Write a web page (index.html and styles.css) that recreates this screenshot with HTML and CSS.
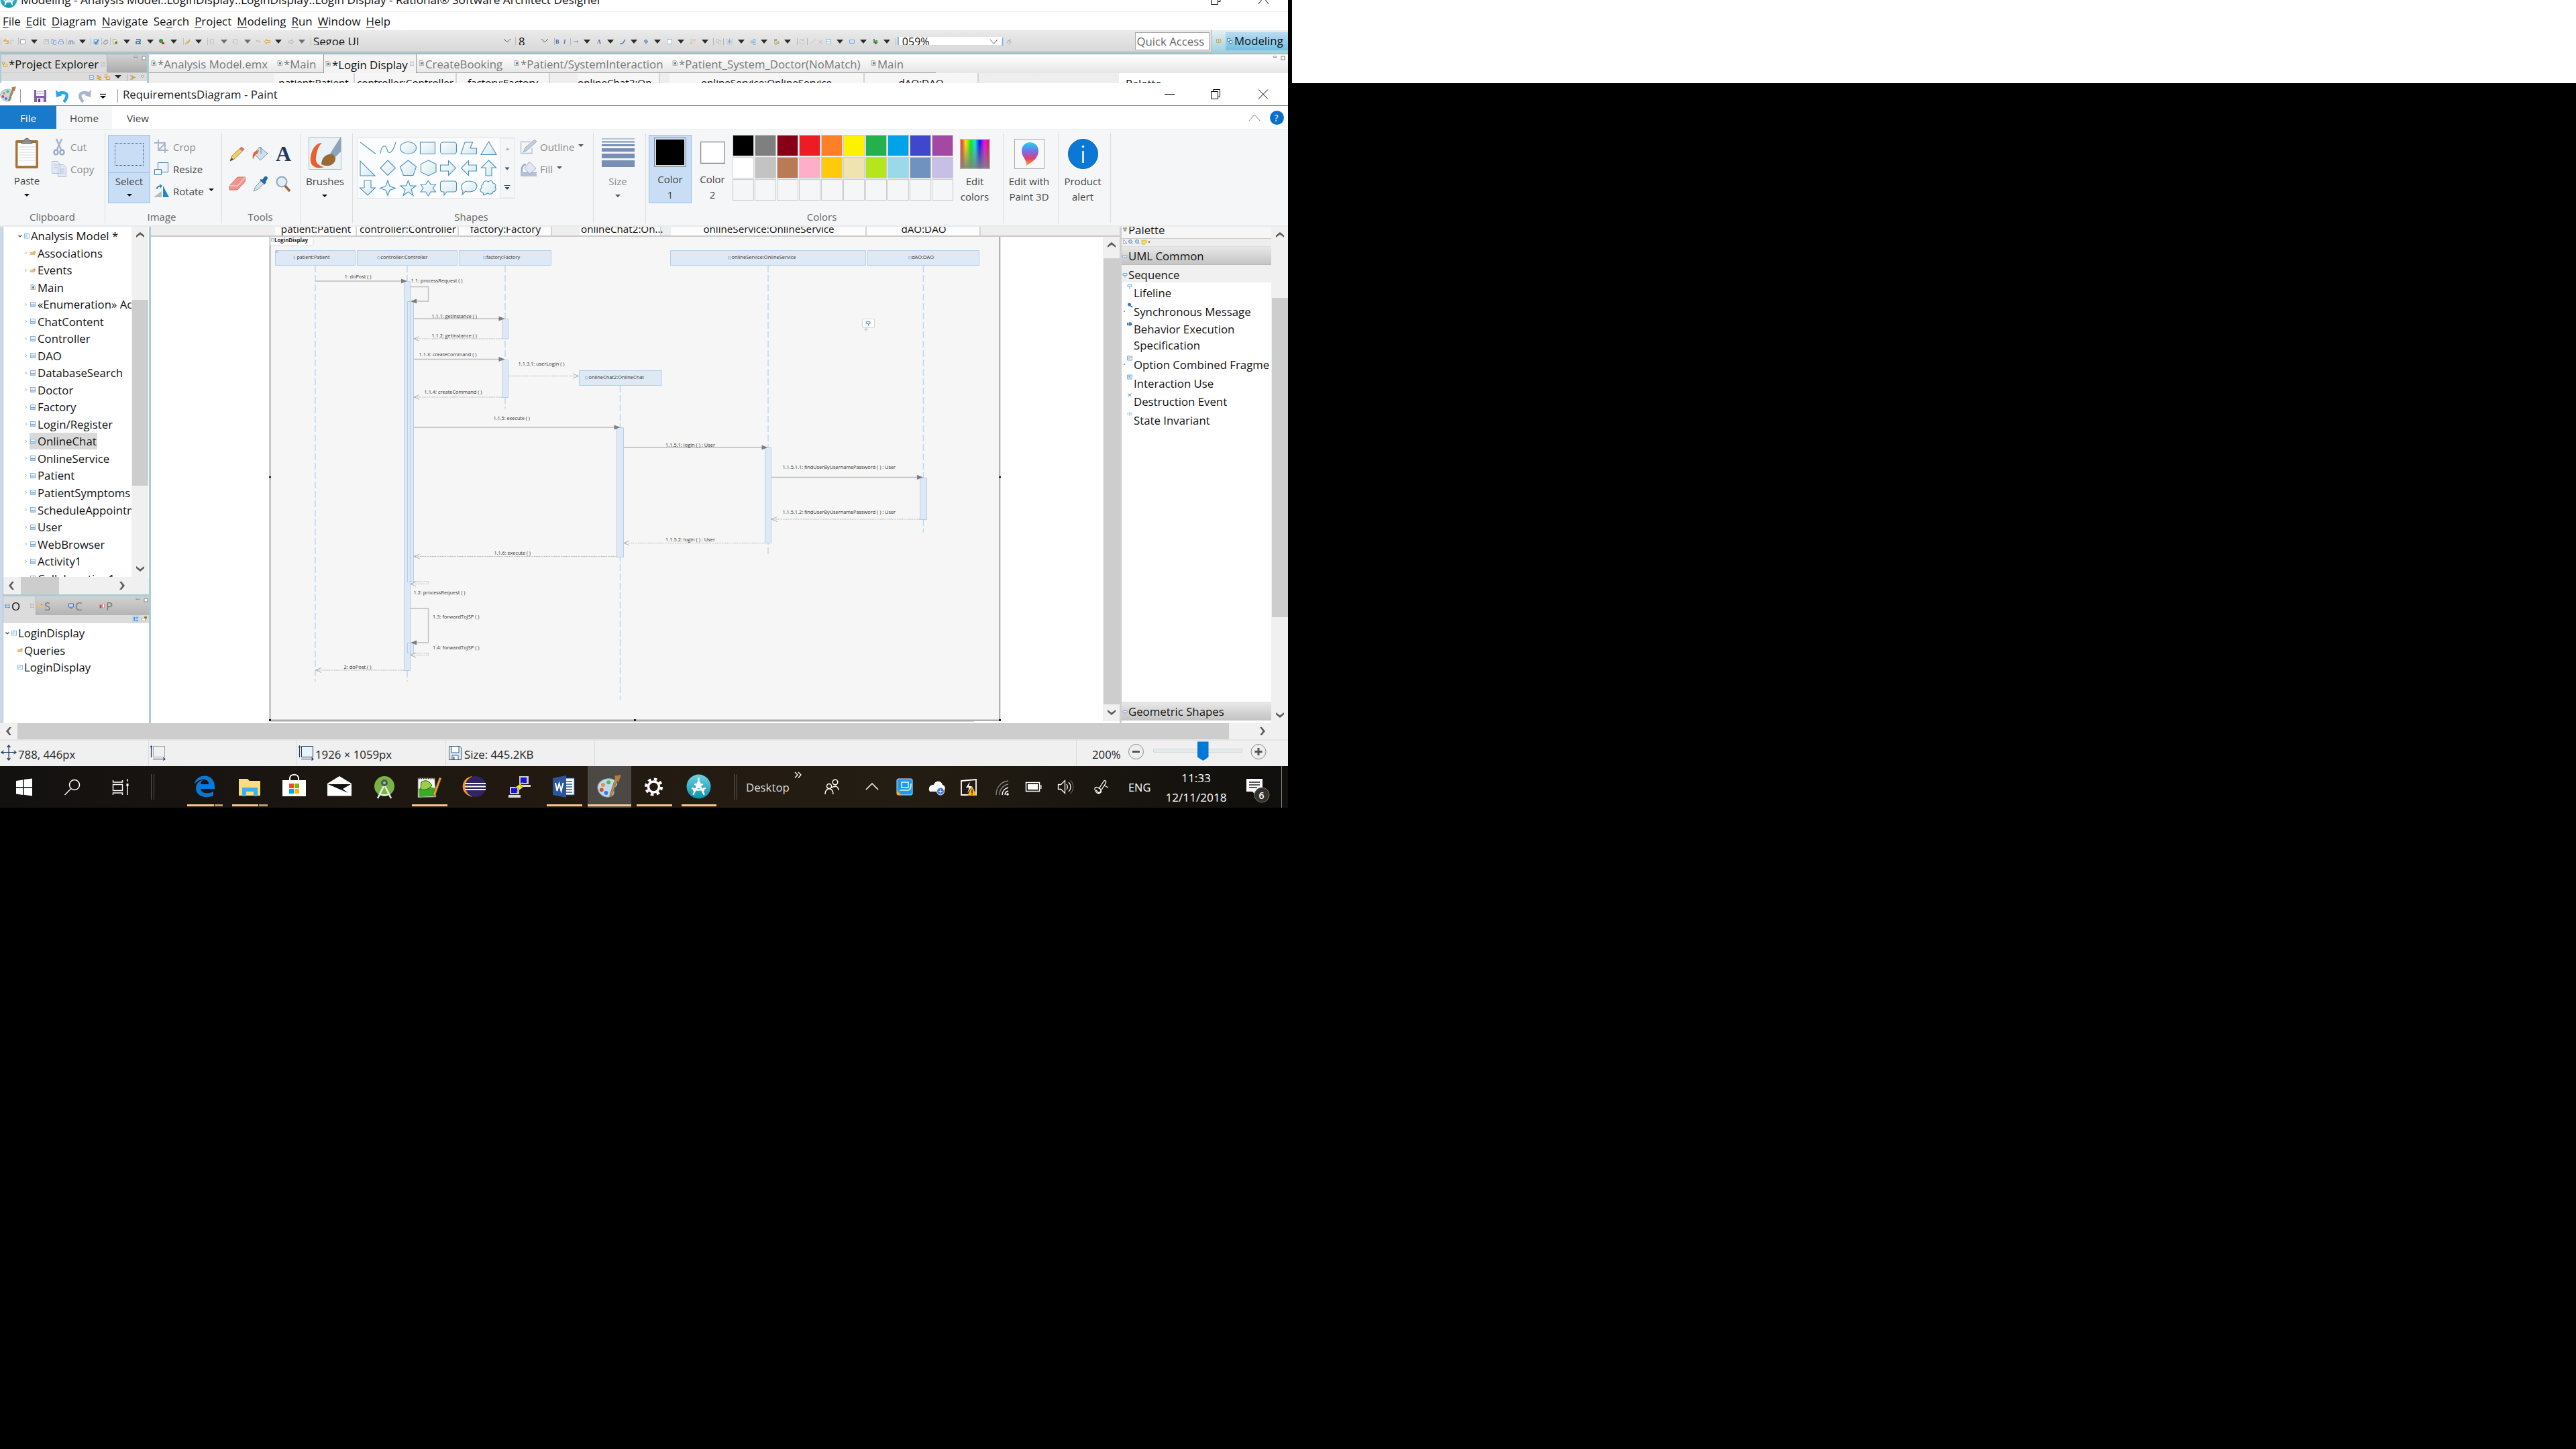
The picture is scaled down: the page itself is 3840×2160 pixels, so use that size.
FILE: index.html
```html
<!DOCTYPE html>
<html lang="en">
<head>
<meta charset="utf-8">
<title>RequirementsDiagram - Paint</title>
<link rel="stylesheet" href="styles.css">
</head>
<body>
<svg class="defs" aria-hidden="true">
  <defs>
    <linearGradient id="g-shape" x1="0" y1="0" x2="1" y2="1"><stop offset="0" stop-color="#fff"/><stop offset="1" stop-color="#d3e8ee"/></linearGradient>
    <linearGradient id="g-hue"><stop offset="0" stop-color="#f21d1d"/><stop offset=".17" stop-color="#f5e614"/><stop offset=".35" stop-color="#12e812"/><stop offset=".5" stop-color="#12e6e6"/><stop offset=".66" stop-color="#1414e8"/><stop offset=".83" stop-color="#e814e8"/><stop offset="1" stop-color="#f0143c"/></linearGradient>
    <linearGradient id="g-fade" x2="0" y2="1"><stop offset=".1" stop-color="#808080" stop-opacity="0"/><stop offset="1" stop-color="#808080" stop-opacity=".9"/></linearGradient>
    <linearGradient id="g-pin" x2="0" y2="1"><stop offset="0" stop-color="#1fd3f3"/><stop offset=".4" stop-color="#7b6be8"/><stop offset=".7" stop-color="#e0406f"/><stop offset="1" stop-color="#ffb020"/></linearGradient>
    <linearGradient id="g-teal" x2="0" y2="1"><stop offset="0" stop-color="#6fd0de"/><stop offset="1" stop-color="#0b93b0"/></linearGradient>
    <symbol id="i-class" viewBox="0 0 8 8"><rect x=".5" y=".5" width="7" height="7" fill="#eaf3fc" stroke="#8fb4dc"/><path d="M1 4.500h6" stroke="#6f9fd0"/><path d="M1 5h6v2H1z" fill="#bcd6f0"/></symbol>
    <symbol id="i-folder" viewBox="0 0 8 8"><path d="M0 3h3l1-1h4l-1 5H0z" fill="#eabf74"/><path d="M4 3l3-2 .5 2z" fill="#6d9bd0"/></symbol>
    <symbol id="i-doc" viewBox="0 0 8 8"><path d="M1 .5h4.500l2 2v5H1z" fill="#dfeaf5" stroke="#aaa081" stroke-width=".8"/><path d="M3 3h3v3H3z" fill="#4f86bf"/></symbol>
    <symbol id="i-chev" viewBox="0 0 8 8"><path d="M2.500 2l2 2-2 2" fill="none" stroke="#a0a0a0"/></symbol>
    <symbol id="i-open" viewBox="0 0 8 8"><path d="M1.500 2.500l2.500 2.500 2.500-2.500" fill="none" stroke="#444" stroke-width="1.200"/></symbol>
    <symbol id="i-frame" viewBox="0 0 8 8"><rect x=".5" y=".5" width="7" height="6.500" fill="#f2f9fd" stroke="#8cc0dc"/><path d="M1 4h3V1" fill="none" stroke="#8cc0dc"/></symbol>
    <symbol id="i-caret" viewBox="0 0 8 4"><path d="M0 0h8L4 4z" fill="currentColor"/></symbol>
    <symbol id="i-up" viewBox="0 0 12 10"><path d="M0 9V6l6-5 6 5v3L6 4.500z" fill="#5a5a5a"/></symbol>
    <symbol id="i-down" viewBox="0 0 12 10"><path d="M0 1v3l6 5 6-5V1L6 5.500z" fill="#5a5a5a"/></symbol>
    <symbol id="i-left" viewBox="0 0 10 12"><path d="M9 0H6L1 6l5 6h3L4.500 6z" fill="#5a5a5a"/></symbol>
    <symbol id="i-right" viewBox="0 0 10 12"><path d="M1 0h3l5 6-5 6H1l4.500-6z" fill="#5a5a5a"/></symbol>
    <symbol id="i-close" viewBox="0 0 8 8"><path d="M1.500 1h1.500l1 1.500L5 1h1.500v1.500L5.500 4l1 1.500V7H5L4 5.500 3 7H1.500V5.500l1-1.500-1-1.500z" fill="none" stroke="#aaa" stroke-width=".7"/></symbol>
    <symbol id="i-minmax" viewBox="0 0 20 8"><path d="M1 2.500V1h5v1.500z" fill="#fff" stroke="#888" stroke-width=".8"/><rect x="13" y="1" width="5" height="5" fill="#fff" stroke="#888" stroke-width="1"/></symbol>
    <symbol id="i-paint" viewBox="0 0 24 24"><path d="M1 15C-1 8 6 3 14 4c5 1 8 5 4 8-3 3 0 5-2 8-4 4-13 2-15-5z" fill="#bcdcee" stroke="#7ba7c2" stroke-width=".7"/><circle cx="6" cy="10" r="2" fill="#f0913c"/><circle cx="11.500" cy="7.500" r="2" fill="#58b947"/><circle cx="4.500" cy="15" r="2" fill="#e2463c"/><circle cx="9" cy="18" r="2" fill="#3c79d8"/><path d="M22 1l-3 7-5 14-1.500-1L17 7z" fill="#c78a48" stroke="#8d5a24" stroke-width=".6"/><path d="M17.500 1L24 0l-2.500 7-3.500-1z" fill="#b57a3f"/></symbol>
    <symbol id="i-rsa" viewBox="0 0 36 36"><circle cx="18" cy="18" r="17.500" fill="url(#g-teal)"/><path d="M18 5v8M18 13l-8 17M18 13l8 17M8 20c6 4 14 4 20 0M12 14l14 10M24 14L10 24" fill="none" stroke="#fff" stroke-width="2.400"/><circle cx="18" cy="14" r="3" fill="#fff"/></symbol>
  </defs>
</svg>

<div class="desktops">
<main class="screen">

  <!-- Rational Software Architect, behind Paint -->
  <section class="rsa">
    <header class="rsa-title">
      <svg class="rsa-logo"><use href="#i-rsa"/></svg>
      <span class="grow">Modeling - Analysis Model::LoginDisplay::LoginDisplay::Login Display - Rational® Software Architect Designer</span>
      <svg class="rsa-ctl" viewBox="0 0 90 16"><path d="M4.500 1v11.500h10V1M8 1v-3h10V8.500h-3M75 12L90-8M90 12L75-8" fill="none" stroke="#000"/></svg>
    </header>
    <nav class="rsa-menu"><span><u>F</u>ile</span><span><u>E</u>dit</span><span><u>D</u>iagram</span><span><u>N</u>avigate</span><span>Se<u>a</u>rch</span><span><u>P</u>roject</span><span><u>M</u>odeling</span><span><u>R</u>un</span><span><u>W</u>indow</span><span><u>H</u>elp</span></nav>
    <div class="rsa-tools">
      <svg class="strip" width="465" height="33" viewBox="0 45 465 33">
        <g stroke="#b5b5b5"><path d="M1.500 57v10M27.500 57v10M99.500 57v10M135.500 57v10M151.500 57v10M164.500 57v10M273.500 57v10M309.500 57v10M463.500 57v10" stroke-dasharray="2 1"/></g>
        <g fill="#2b2b2b"><path d="M46 59h10l-5 6zM118 59h10l-5 6zM184 59h10l-5 6zM219 59h10l-5 6zM254 59h10l-5 6zM291 59h10l-5 6zM410 59h10l-5 6z"/></g>
        <g fill="#6f6f6f"><path d="M329 59h10l-5 6zM364 59h10l-5 6zM445 59h10l-5 6z"/></g>
        <g fill="none"><path d="M5 62l3-3v2h4v4H8" stroke="#e0a94c" stroke-width="1.500"/><path d="M21 62l-3-3v2h-3v4h3" stroke="#c5c5c5"/><path d="M30.500 59.500h7v6h-7z" fill="#fff" stroke="#7ea6cf"/><path d="M30 59h8" stroke="#e6b447" stroke-width="2"/>
        <path d="M65.500 58.500h7v7h-7zM67.500 58.500v3h3v-3" stroke="#bbb"/><path d="M76.500 58.500h4v6h-4zM79.500 60.500h4v6h-4z" fill="#dce8f5" stroke="#8fb0d4"/><path d="M87.500 61.500h7v4h-7zM89 58.500h4v3h-4z" fill="#dce8f5" stroke="#7fa3cd"/><path d="M103 61h6M102.500 62.500h3v3h-3zM107.500 62.500h3v3h-3z" stroke="#7a8fae"/>
        <path d="M140 59h6v7h-6z" fill="#d7e7f7" stroke="#7aa8da"/><path d="M141 62l2 3 4-6" stroke="#2e6fb8" stroke-width="1.400"/><path d="M154 64l3-4 3 0v4l-3 2z" stroke="#a5a5a5" stroke-width="1.500"/><path d="M168.500 58.500h4l2 2v5h-6z" fill="#f4e9cd" stroke="#b8a878"/><circle cx="173" cy="63.500" r="2" fill="#3d9a52"/><path d="M203 59h6v3h-6v3h7" stroke="#476fa8" stroke-width="1.500"/><path d="M207 62l3 2-3 2z" fill="#3d9a52"/><circle cx="240" cy="61" r="3" fill="#2f9c48"/><path d="M241 63h4v3h-4z" fill="#c33"/>
        <path d="M276 66l3-4 4-3-1 4z" fill="#e8c07a" stroke="#d09a4c" stroke-width=".7"/><path d="M313.500 58.500h5v7h-5zM311 62h4M348.500 58.500h5v7h-5zM346 62h4" stroke="#c4c4c4"/><path d="M382 61h5v3M382 61l2-2M382 61l2 2" stroke="#bbb"/><path d="M394 62l3.500-3.500v2h5v3h-5v2z" fill="#fbe6a8" stroke="#d6a23a" stroke-width=".9"/><path d="M438 62l-3.500-3v2h-4v3h4v2z" stroke="#bbb"/></g>
      </svg>
      <span class="tool-field font-name">Segoe UI</span>
      <svg class="chev" viewBox="0 0 12 8"><path d="M1 1l5 5 5-5" fill="none" stroke="#555"/></svg>
      <span class="tool-field font-size">8</span>
      <svg class="chev" viewBox="0 0 12 8"><path d="M1 1l5 5 5-5" fill="none" stroke="#555"/></svg>
      <svg class="strip" width="517" height="33" viewBox="816 45 517 33">
        <g stroke="#b5b5b5"><path d="M821.500 57v10M845.500 57v10M1058.500 57v10M1073.500 57v10M1183.500 57v10M1198.500 57v10M1330.500 57v10"/></g>
        <g fill="#2b2b2b"><path d="M865 59h10l-5 6zM900 59h10l-5 6zM935 59h10l-5 6zM970 59h10l-5 6zM1005 59h10l-5 6zM1041 59h10l-5 6zM1095 59h10l-5 6zM1129 59h10l-5 6zM1164 59h10l-5 6zM1242 59h10l-5 6zM1277 59h10l-5 6zM1312 59h10l-5 6z"/></g>
        <g class="glyph"><text x="823" y="65">B</text><text x="835" y="65" font-style="italic">I</text><text x="885" y="65">A</text></g>
        <g fill="none"><path d="M850 62h7M855 60.500l2 1.500-2 1.500" stroke="#6f95c6"/><path d="M919 65h4l4-6" stroke="#4f7fbc" stroke-width="1.400"/><path d="M955 61l3-2 3 3-3 3z" fill="#8aa6cc" stroke="#5a7db0" stroke-width=".8"/><path d="M989.500 58.500h7v7h-7z" fill="#fff" stroke="#8bb4dd"/>
        <path d="M1024 58h3.500v3.500h-3.500z" fill="#bfe3b4"/><path d="M1028.500 58h3.500v3.500h-3.500z" fill="#d5c2ee"/><path d="M1024 62.500h3.500v3.500h-3.500z" fill="#f4b8b8"/><path d="M1028.500 62.500h3.500v3.500h-3.500z" fill="#f5de8c"/>
        <path d="M1062.500 58.500h4v5h-4zM1065.500 60.500h4v5h-4zM1187.500 58.500h6v7h-6zM1190 60.500h3" stroke="#c8c8c8"/><path d="M1078 58l9 8M1087 58l-9 8M1082.500 57.500v9M1078 62h9" stroke="#7f9fc8" stroke-dasharray="1.500 1"/><path d="M1114 61h3v3h-3zM1118 58.500h3v3h-3zM1118 63.500h3v3h-3z" fill="#cfe1f4" stroke="#88a8d0" stroke-width=".8"/><path d="M1149.500 58.500h3v2h-3zM1153 62h3v3h-3zM1150 61v5h3" stroke="#a89a5c"/>
        <path d="M1203 65l4-3 4-3M1215 66l6-7M1215 60l6 5" stroke="#c0c0c0"/><path d="M1226.500 58.500h7v7h-7zM1227 62h7" fill="#f5faff" stroke="#8bb4dd"/><path d="M1261.500 59.500h7v5h-7z" fill="#cfe2f6" stroke="#7ba6d4"/><path d="M1297 58h2v6h-2zM1300 60h3v5h-3z" fill="#3d9a52"/><path d="M1299 62h2v4h-2z" fill="#8a4b2a"/></g>
      </svg>
      <span class="tool-field zoom-value">059%</span>
      <svg class="strip zoom-tail" width="212" height="33" viewBox="1476 45 212 33"><path d="M1472 59l5.500 6 5.500-6" fill="none" stroke="#555"/><path d="M1490.500 56v12" stroke="#7eb4ea" stroke-width="2"/><path d="M1497 64l3-4 3 2-3 4M1500 60l3-1" fill="none" stroke="#b5b5b5" stroke-width="1.300"/></svg>
      <span class="quick">Quick Access</span>
      <div class="perspective"><svg viewBox="0 0 8 8" class="mini"><path d="M.5 1.500h6v5h-6zM3.500 1.500v5M1 4h6" fill="#fff5d0" stroke="#b99a5a" stroke-width=".8"/></svg><span class="persp-on"><svg viewBox="0 0 8 8" class="mini"><path d="M.5.5h4v4h-4zM3.500 3.500h4v4h-4z" fill="#e8f2fb" stroke="#3e7bbd" stroke-width=".9"/></svg>Modeling</span></div>
    </div>
    <div class="rsa-body">
      <div class="explorer-top">
        <div class="view-tabs"><span class="view-tab"><svg class="mini" viewBox="0 0 8 8"><path d="M.5.5h3v3h-3zM2.500 3.500h5v4h-5z" fill="#f7e3b0" stroke="#cf9a45" stroke-width=".9"/></svg>*Project Explorer<svg class="mini"><use href="#i-close"/></svg></span><svg class="minmax"><use href="#i-minmax"/></svg></div>
        <div class="view-tools"><svg width="88" height="14" viewBox="132 108 88 14"><path d="M133.500 111.500h6v6h-6zM135 114.500h3" fill="#eef5fc" stroke="#88aad0"/><path d="M144 112l6 2-5 2 6 2M146 111v3" fill="none" stroke="#d9a03c" stroke-width="1.500"/><path d="M156.500 110.500h3v4h-3zM158.500 113.500h5v4h-5z" fill="#f7e3b0" stroke="#cf9a45"/><path d="M171 111h10l-5 5z" fill="#2b2b2b"/><path d="M189.500 110v9" stroke="#aaa"/><path d="M194 112h3l3 2.500-3 2.500h-3M196 114.500h6" fill="none" stroke="#c2a160" stroke-width="1.500"/><path d="M210 112h5l-2.500 2.500z" fill="#fff" stroke="#888" stroke-width=".7"/></svg></div>
      </div>
      <div class="editor-top">
        <div class="editor-tabs">
          <span class="tab t1"><svg class="mini"><use href="#i-doc"/></svg>*Analysis Model.emx</span>
          <span class="tab t2"><svg class="mini"><use href="#i-doc"/></svg>*Main</span>
          <span class="tab t3 on"><svg class="mini"><use href="#i-doc"/></svg>*Login Display<svg class="mini"><use href="#i-close"/></svg></span>
          <span class="tab t4"><svg class="mini"><use href="#i-doc"/></svg>CreateBooking</span>
          <span class="tab t5"><svg class="mini"><use href="#i-doc"/></svg>*Patient/SystemInteraction</span>
          <span class="tab t6"><svg class="mini"><use href="#i-doc"/></svg>*Patient_System_Doctor(NoMatch)</span>
          <span class="tab t7"><svg class="mini"><use href="#i-doc"/></svg>Main</span>
          <svg class="minmax"><use href="#i-minmax"/></svg>
        </div>
        <div class="heads heads-back"><i></i><span>patient:Patient</span><span>controller:Controller</span><span>factory:Factory</span><i></i><span>onlineChat2:On...</span><i></i><span>onlineService:OnlineService</span><span>dAO:DAO</span><i></i><b>Palette</b></div>
      </div>
    </div>
  </section>

  <!-- Paint window -->
  <section class="paint">
    <header class="paint-title">
      <svg class="title-icons" width="183" height="33" viewBox="0 124 183 33">
        <svg x="0" y="129" width="24" height="24"><use href="#i-paint"/></svg>
        <path d="M30.500 133v20M175.500 133v20" stroke="#999"/>
        <path d="M51 134h18v18H51z" fill="#8260b0"/><path d="M54 134h12v9H54z" fill="#f6f4fa"/><path d="M55 136.500h10M55 139.500h10" stroke="#c8c0d8"/><path d="M55 146h10v6H55z" fill="#e8e4f0"/><path d="M57 147h3v5h-3z" fill="#5a3c8c"/>
        <path d="M88 139c8-3 14 1 11 7-1 3-3 5-4 6" fill="none" stroke="#2aa6e6" stroke-width="4.500"/><path d="M83 134l1 11 9-3z" fill="#2aa6e6"/>
        <path d="M131 139c-8-3-14 1-11 7 1 3 3 5 4 6" fill="none" stroke="#a9b5cb" stroke-width="4.500"/><path d="M136 134l-1 11-9-3z" fill="#a9b5cb"/>
        <path d="M149 140.500h9" stroke="#222" stroke-width="1.300"/><path d="M149 143h9l-4.500 4z" fill="#111"/>
      </svg>
      <span class="grow">RequirementsDiagram - Paint</span>
      <svg width="190" height="33" viewBox="1730 124 190 33"><path d="M1736 140.500h15M1805.500 136.500h10v11h-10zM1808.500 136v-2.500h10v11h-3M1876 133.500l14 14M1890 133.500l-14 14" fill="none" stroke="#000"/></svg>
    </header>
    <nav class="ribbon-tabs"><span class="file-tab">File</span><span class="home-tab">Home</span><span class="view-tab2">View</span><svg width="60" height="35" viewBox="1860 158 60 35"><path d="M1862 180l8-9 8 9" fill="none" stroke="#888"/><circle cx="1903.500" cy="175.500" r="10.500" fill="#0a6fc8"/><text x="1899.500" y="181" class="qmark">?</text></svg></nav>
    <div class="ribbon">
      <div class="group g-clip">
        <div class="row">
          <div class="big w-paste"><svg width="36" height="48" viewBox="22 204 36 48"><rect x="23" y="209" width="34" height="42" rx="2" fill="#a9733a"/><path d="M26.500 213h27v34h-27z" fill="#fff"/><path d="M28 219h24M28 223h24M28 227h24M28 231h24M28 235h24M28 239h24" stroke="#cfd6dd"/><path d="M32 214v-4h4c0-5 8-5 8 0h4v4z" fill="#8b8f93" stroke="#5f6468"/></svg><span>Paste</span><svg class="caret"><use href="#i-caret"/></svg></div>
          <div class="small-col"><span class="dim"><svg width="24" height="26" viewBox="76 204 24 26"><path d="M84 205l7 16M92 205l-7 16" stroke="#a9b3cb" stroke-width="2.500"/><ellipse cx="83.500" cy="225" rx="3" ry="3.500" fill="none" stroke="#9aa9c8" stroke-width="2.500"/><ellipse cx="92.500" cy="225" rx="3" ry="3.500" fill="none" stroke="#9aa9c8" stroke-width="2.500"/></svg>Cut</span><span class="dim"><svg width="24" height="26" viewBox="76 237 24 26"><path d="M77.500 238.500h8l4 4v14h-12zM86.500 243.500h8l4 4v14h-12z" fill="#e3e9f4" stroke="#b0bfd9"/><path d="M89 250h7M89 253h7M89 256h7M80 244h5M80 248h5" stroke="#b0bfd9"/></svg>Copy</span></div>
        </div>
        <footer>Clipboard</footer>
      </div>
      <div class="group g-image">
        <div class="row">
          <div class="select-btn"><div class="sel-top"><i></i></div><span>Select</span><svg class="caret"><use href="#i-caret"/></svg></div>
          <div class="small-col"><span class="dim"><svg width="24" height="24" viewBox="229 207 24 24"><path d="M236 208v16h15M230 213h16v15M236 224l10-10" fill="none" stroke="#a5b3cf" stroke-width="1.800"/></svg>Crop</span><span><svg width="24" height="24" viewBox="229 240 24 24"><path d="M235.500 242.500h15v14h-15z" fill="#eaf5fb" stroke="#3d82ac"/><path d="M230.500 252.500h10v8h-10z" fill="#f4fafd" stroke="#3d82ac"/></svg>Resize</span><span><svg width="24" height="24" viewBox="229 272 24 24"><path d="M229 293l12-9v9z" fill="#b5bac0"/><path d="M243 276l9 17h-9z" fill="#1f86cf"/><path d="M234 281c0-4 3-5 6-4" fill="none" stroke="#2e86c8" stroke-width="2"/><path d="M238 273l4 3-3 4z" fill="#2e86c8"/></svg>Rotate<svg class="caret c-side"><use href="#i-caret"/></svg></span></div>
        </div>
        <footer>Image</footer>
      </div>
      <div class="group g-tools">
        <svg width="100" height="104" viewBox="338 198 100 104">
          <path d="M342 240l3-8 14-13 4 3.500-14 14z" fill="#f3cf62" stroke="#8a6d2c" stroke-width=".8"/><path d="M356 222l3-3 4 3.500-3 3z" fill="#d9737a"/><path d="M342 240l2-5 3 3z" fill="#444"/>
          <path d="M386 219l12 10-11 10-9-10z" fill="#cfe2f2" stroke="#6f93b5"/><path d="M376 238c-1-8 0-13 9-14l-2 5c-4 1-5 5-7 9z" fill="#e8683a"/><path d="M388 219v10" stroke="#777"/>
          <text x="410" y="240" class="tool-a">A</text>
          <path d="M341 277l12-13h12l-1 7-11 12h-12z" fill="#f0948f" stroke="#cf7570"/><path d="M341 277h12l12-13" fill="none" stroke="#fbc9c6" stroke-width="1.500"/>
          <path d="M377 285l3-7 9-9 4 4-9 9z" fill="#d5e3ea" stroke="#7b97a8"/><path d="M386 268l7 7 3-3-1-1 3-5c0-4-4-4-5-2l-3 4-2-1z" fill="#2268a8"/>
          <circle cx="419" cy="271" r="7.500" fill="#dceffc" stroke="#98a6b3" stroke-width="2"/><path d="M424 277l7 8" stroke="#9b6a3a" stroke-width="3.500"/>
        </svg>
        <footer>Tools</footer>
      </div>
      <div class="group g-brush"><div class="big"><svg width="49" height="49" viewBox="460 205 49 49"><rect x=".5" y=".5" width="48" height="48" transform="translate(460 205)" fill="#e9f3f7" stroke="#b6bcc0"/><path d="M480 214c-12 0-18 16-17 28 2 9 12 11 20 8-8-2-13-6-12-14 1-10 4-18 9-22z" fill="#e9602c"/><path d="M492 230l16-25v22l-9 9z" fill="#8da3ba"/><path d="M479 246c0-10 8-17 17-15l4 5c1 9-9 16-21 10z" fill="#9a6a35"/></svg><span>Brushes</span><svg class="caret"><use href="#i-caret"/></svg></div><footer></footer></div>
      <div class="group g-shapes">
        <div class="row">
          <svg width="237" height="92" viewBox="532 205 237 92">
            <rect x="532.500" y="205.500" width="235" height="90" fill="#fbfcfd" stroke="#dfe2e5"/><path d="M745.500 206h22v89h-22z" fill="#f5f6f7" stroke="#dfe2e5"/>
            <g fill="url(#g-shape)" stroke="#4f8fbe" stroke-width="1.100"><path d="M537 212l23 17.500" fill="none"/><path d="M567 229c2-14 8-14 10-6s8 6 13-11" fill="none"/><ellipse cx="608.500" cy="220.500" rx="12" ry="9"/><path d="M626.500 212h22v17.500h-22z"/><rect x="656.500" y="212" width="24" height="17.500" rx="4"/><path d="M693 212h11.500l-3.500 9h9.500v8.500h-23.500z"/><path d="M728.500 211l11.500 19.500h-23z"/>
            <path d="M537 240v22h22z"/><path d="M578 239l11.500 11.500-11.500 11-11-11z"/><path d="M608.500 239l12 9.500-4.500 13h-14.500l-5-13z"/><path d="M638.500 239l11.500 5.500v12l-11.500 5.500-11-5.500v-12z"/><path d="M656.500 246h12v-6.500l11 11-11 11V255h-12z"/><path d="M710.500 246h-12v-6.500l-11 11 11 11V255h12z"/><path d="M728.500 239l11 11h-6.500v12h-9v-12h-6.500z"/>
            <path d="M543 269h10v11h6.500l-11.500 11-11.500-11h6.500z"/><path d="M578 269l3 8.500 8.500 3-8.500 3-3 8-3-8-8.500-3 8.500-3z"/><path d="M608.500 269l3 8h8.500l-7 5.500 3 9-7.500-5.500-7.500 5.500 3-9-7-5.500h8.500z"/><path d="M638.500 269l3.500 6h7.500l-4 5.500 4 5.500H642l-3.500 6-4-6H627l4-5.500-4-5.500h7.500z"/><path d="M660 270h17q3.500 0 3.500 3.500v9q0 3.500-3.500 3.500h-11l-4 5v-5h-2q-3.500 0-3.500-3.500v-9q0-3.500 3.500-3.500z"/><path d="M690 285c-6-7 0-15 9-15 17 0 15 16 0 16-2 0-4 0-5-1l-5 5z"/><path d="M720 275c0-6 6-6 8-4 3-3 7-1 7 2 4 0 5 4 3 6 3 3 0 7-3 7-1 4-6 4-8 2l-6 3-1-4c-5-1-5-5-2-7-1-2 0-4 2-5z"/></g>
            <path d="M753 224h7l-3.500-4z" fill="#b0b6c2"/><path d="M752.500 249.500h7l-3.500 4zM752.500 279h7l-3.500 4z" fill="#3c4f78"/><path d="M751.500 276.500h9" stroke="#3c4f78"/>
          </svg>
          <div class="small-col"><span class="dim"><svg width="26" height="24" viewBox="775 207 26 24"><path d="M776.500 211.500h14M776.500 211v17.500h16.500v-8" fill="none" stroke="#b3bfd6" stroke-width="1.300"/><path d="M780 227l3-7 14-12 3 3-14 13z" fill="#c5cde0" stroke="#9dabc9"/></svg>Outline<svg class="caret c-side"><use href="#i-caret"/></svg></span><span class="dim"><svg width="26" height="24" viewBox="775 239 26 24"><path d="M776 255h24v7h-24z" fill="#b4c0d8"/><path d="M789 240l10 10-9 8-8-8z" fill="#e1e7f2" stroke="#9dabc9"/><path d="M778 255c-1-6 1-10 6-11" fill="none" stroke="#9dabc9" stroke-width="2.500"/></svg>Fill<svg class="caret c-side"><use href="#i-caret"/></svg></span></div>
        </div>
        <footer>Shapes</footer>
      </div>
      <div class="group g-size"><div class="big dim"><svg width="49" height="49" viewBox="896 204 49 49"><path d="M896 206.500h49v1h-49zM896 210.500h49v2h-49zM896 215h49v3h-49zM896 221h49v5h-49zM896 229h49v7h-49zM896 239h49v10h-49z" fill="#788eb5"/></svg><span>Size</span><svg class="caret"><use href="#i-caret"/></svg></div><footer></footer></div>
      <div class="group g-colors">
        <div class="row">
          <div class="color-btn on"><i class="sw1"></i><span>Color</span><span>1</span></div>
          <div class="color-btn"><i class="sw2"></i><span>Color</span><span>2</span></div>
          <div class="swatches"><i class="k0"></i><i class="k1"></i><i class="k2"></i><i class="k3"></i><i class="k4"></i><i class="k5"></i><i class="k6"></i><i class="k7"></i><i class="k8"></i><i class="k9"></i><i class="k10"></i><i class="k11"></i><i class="k12"></i><i class="k13"></i><i class="k14"></i><i class="k15"></i><i class="k16"></i><i class="k17"></i><i class="k18"></i><i class="k19"></i><i></i><i></i><i></i><i></i><i></i><i></i><i></i><i></i><i></i><i></i></div>
          <div class="big-two"><svg width="45" height="45" viewBox="0 0 45 45"><rect x=".5" y=".5" width="44" height="44" fill="#fff" stroke="#a3a3a3"/><rect x="1.500" y="1.500" width="42" height="42" fill="url(#g-hue)"/><rect x="1.500" y="1.500" width="42" height="42" fill="url(#g-fade)"/></svg><span>Edit</span><span>colors</span></div>
        </div>
        <footer>Colors</footer>
      </div>
      <div class="group g-3d"><div class="big-two"><svg width="45" height="45" viewBox="0 0 45 45"><rect x=".5" y=".5" width="44" height="44" fill="#f8f8f8" stroke="#a9a9a9"/><path d="M18 40c1-9-7-13-7-22 0-17 25-17 25 0 0 10-8 16-18 22z" fill="url(#g-pin)"/></svg><span>Edit with</span><span>Paint 3D</span></div><footer></footer></div>
      <div class="group g-alert"><div class="big-two"><svg width="45" height="45" viewBox="0 0 45 45"><circle cx="22.500" cy="22.500" r="22" fill="#0a78d4" stroke="#0962ae"/><path d="M22.500 18v18" stroke="#fff" stroke-width="2.500"/><circle cx="22.500" cy="11.500" r="1.800" fill="#fff"/></svg><span>Product</span><span>alert</span></div><footer></footer></div>
    </div>

    <div class="canvas">
      <aside class="left">
        <div class="tree-box">
          <ul class="tree">
            <li class="root"><svg class="ic"><use href="#i-open"/></svg><svg class="ic"><use href="#i-frame"/></svg><span>Analysis Model *</span></li>
            <li><svg class="ic"><use href="#i-chev"/></svg><svg class="ic"><use href="#i-folder"/></svg><span>Associations</span></li>
            <li><svg class="ic"><use href="#i-chev"/></svg><svg class="ic"><use href="#i-folder"/></svg><span>Events</span></li>
            <li><svg class="ic"></svg><svg class="ic"><use href="#i-doc"/></svg><span>Main</span></li>
            <li><svg class="ic"><use href="#i-chev"/></svg><svg class="ic"><use href="#i-class"/></svg><span>«Enumeration» Ac</span></li>
            <li><svg class="ic"><use href="#i-chev"/></svg><svg class="ic"><use href="#i-class"/></svg><span>ChatContent</span></li>
            <li><svg class="ic"><use href="#i-chev"/></svg><svg class="ic"><use href="#i-class"/></svg><span>Controller</span></li>
            <li><svg class="ic"><use href="#i-chev"/></svg><svg class="ic"><use href="#i-class"/></svg><span>DAO</span></li>
            <li><svg class="ic"><use href="#i-chev"/></svg><svg class="ic"><use href="#i-class"/></svg><span>DatabaseSearch</span></li>
            <li><svg class="ic"><use href="#i-chev"/></svg><svg class="ic"><use href="#i-class"/></svg><span>Doctor</span></li>
            <li><svg class="ic"><use href="#i-chev"/></svg><svg class="ic"><use href="#i-class"/></svg><span>Factory</span></li>
            <li><svg class="ic"><use href="#i-chev"/></svg><svg class="ic"><use href="#i-class"/></svg><span>Login/Register</span></li>
            <li class="sel"><svg class="ic"><use href="#i-chev"/></svg><svg class="ic"><use href="#i-class"/></svg><span>OnlineChat</span></li>
            <li><svg class="ic"><use href="#i-chev"/></svg><svg class="ic"><use href="#i-class"/></svg><span>OnlineService</span></li>
            <li><svg class="ic"><use href="#i-chev"/></svg><svg class="ic"><use href="#i-class"/></svg><span>Patient</span></li>
            <li><svg class="ic"><use href="#i-chev"/></svg><svg class="ic"><use href="#i-class"/></svg><span>PatientSymptoms</span></li>
            <li><svg class="ic"><use href="#i-chev"/></svg><svg class="ic"><use href="#i-class"/></svg><span>ScheduleAppointm</span></li>
            <li><svg class="ic"><use href="#i-chev"/></svg><svg class="ic"><use href="#i-class"/></svg><span>User</span></li>
            <li><svg class="ic"><use href="#i-chev"/></svg><svg class="ic"><use href="#i-class"/></svg><span>WebBrowser</span></li>
            <li><svg class="ic"><use href="#i-chev"/></svg><svg class="ic"><use href="#i-class"/></svg><span>Activity1</span></li>
            <li><svg class="ic"></svg><svg class="ic"><use href="#i-class"/></svg><span>Collaboration1</span></li>
          </ul>
          <div class="vbar tree-bar"><svg><use href="#i-up"/></svg><i></i><svg><use href="#i-down"/></svg></div>
        </div>
        <div class="hbar tree-hbar"><svg><use href="#i-left"/></svg><i></i><svg><use href="#i-right"/></svg></div>
        <div class="out-tabs"><span class="o on"><svg class="mini" viewBox="0 0 8 8"><path d="M1 1v6M1 1.500h2M1 4h2M1 6.500h2M4 1.500h4M4 4h4M4 6.500h4" stroke="#5e93c9" fill="none"/></svg>O<svg class="mini"><use href="#i-close"/></svg></span><span class="s"><svg class="mini"><use href="#i-folder"/></svg>S</span><span class="c"><svg class="mini" viewBox="0 0 8 8"><path d="M.5 1h7v5h-7z" fill="#cfe0f5" stroke="#3f66a8"/><path d="M2 7.500h4" stroke="#3f66a8"/></svg>C</span><span class="p"><svg class="mini" viewBox="0 0 8 8"><path d="M.5 2.500h3v5h-3z" fill="#d9455c"/><path d="M4.500 1h3v6h-3z" fill="#fff" stroke="#e08592"/></svg>P</span><svg class="minmax"><use href="#i-minmax"/></svg></div>
        <div class="out-tools"><svg width="24" height="12" viewBox="0 0 24 12"><path d="M0 0h11v11H0z" fill="#bcd8f3"/><path d="M3 3v5h2M3 4h2M6 4h3M6 8h3" stroke="#365f96" fill="none"/><path d="M14.500 4.500h5v4h-5z" fill="#fff" stroke="#b7a765"/><path d="M18 2h4v3h-4z" fill="#8a7a3a"/></svg></div>
        <ul class="outline">
          <li><svg class="ic"><use href="#i-open"/></svg><svg class="ic"><use href="#i-frame"/></svg><span>LoginDisplay</span></li>
          <li class="in"><svg class="ic"><use href="#i-folder"/></svg><span>Queries</span></li>
          <li class="in"><svg class="ic"><use href="#i-frame"/></svg><span>LoginDisplay</span></li>
        </ul>
      </aside>
      <div class="center">
        <div class="heads heads-front"><i></i><span>patient:Patient</span><span>controller:Controller</span><span>factory:Factory</span><i></i><span>onlineChat2:On...</span><i></i><span>onlineService:OnlineService</span><span>dAO:DAO</span><i></i></div>
        <div class="stage">
          <svg class="diagram" width="1419" height="723" viewBox="225 353 1419 723">
            <rect x="402.500" y="352" width="1088" height="721.500" fill="#f6f6f6"/>
            <path d="M402.500 1075h1050v2h-1050z" fill="#d0d0d0"/>
            <path d="M402.500 353v720.500h1088V353" fill="none" stroke="#777" stroke-width="1.300"/>
            <path d="M401 710h3v2.500h-3zM401 1072h3v3h-3zM945 1072h3v3h-3zM1489 1072h3v3h-3zM1489 710h3v2.500h-3z" fill="#222"/>
            <path d="M403 353h64v11l-2 2h-62z" fill="#fff" stroke="#ddd"/><text class="frame-name" x="409" y="360.500" textLength="50" lengthAdjust="spacingAndGlyphs">LoginDisplay</text><path d="M404.500 355.500h3.500v4h-3.500z" fill="#dff" stroke="#9cc3e4"/>
            <g class="life"><path d="M470 396v620M607 396v23M607 1000v16M753 396v213M924.500 575v468M1145 396v430M1376.500 396v398"/></g>
            <g class="box"><path d="M410.500 373.500h119v22h-119zM532.500 373.500h149v22h-149zM684.500 373.500h137v22h-137zM999.500 373.500h291v22h-291zM1293.500 373.500h166v22h-166zM863.500 552.500h122.500v22H863.500z"/>
              <path d="M602.500 419.500h9v580h-9zM607.500 449.500h9v418h-9zM607.500 958.500h9v15h-9zM748.500 475.500h9v29.500h-9zM748.500 536.500h9v56h-9zM919.500 637.500h10v193h-10zM1140.500 667.500h9v142h-9zM1371.500 712.500h10v62h-10z"/></g>
            <g class="tiny"><path d="M411.500 374h2.500v2.500h-2.500z"/><path d="M438 382h1.500v4H438zM562.500 382.500h4v3.500h-4zM720.500 382.500h4v3.500h-4zM872.500 561.500h4v3.500h-4zM1085.500 382.500h4v3.500h-4zM1354.500 382.500h4v3.500h-4z"/></g>
            <g class="msg"><path d="M470 419h130M612 427.500h26.500V449H620M617 475h128M617 535.500h128M617 637h300M930 667h207M1150 711.500h219M612 907h26.500v51H620"/></g>
            <g class="ret"><path d="M748 505H617M748 592H617M758 560.500h105M1371 774H1150M1140 809.500H930M920 829.500H617M617 867h22v3.500h-27M617 973.500h22v3h-27M602 999H471"/></g>
            <g class="open"><path d="M625 501.500l-8 3.500 8 3.500M625 588.500l-8 3.500 8 3.500M854 557l8.500 3.500-8.500 3.500M1158.500 770.500l-8.500 3.500 8.500 3.500M938 806l-8 3.500 8 3.500M625.500 826l-8.500 3.500 8.500 3.500M620 867l-8 3.500 8 3.500M620 973l-8 3.500 8 3.500M479 995.500l-8.500 3.500 8.500 3.500"/></g>
            <g fill="#7d7d7d"><path d="M598 415.500l9 3.500-9 3.500zM743.500 471.500l9 3.500-9 3.500zM743.500 532l9 3.500-9 3.500zM915.500 633.500l9 3.500-9 3.500zM1135.500 663.500l9 3.500-9 3.500zM1367 708l9 3.500-9 3.500zM621 445.500l-9 3.500 9 3.500zM621 954.500l-9 3.500 9 3.500z"/></g>
            <g class="lbl">
              <text x="442.500" y="386.300" textLength="49" lengthAdjust="spacingAndGlyphs">patient:Patient</text><text x="567.500" y="386.300" textLength="70" lengthAdjust="spacingAndGlyphs">controller:Controller</text><text x="725" y="386.300" textLength="50" lengthAdjust="spacingAndGlyphs">factory:Factory</text><text x="877.500" y="565.300" textLength="82.500" lengthAdjust="spacingAndGlyphs">onlineChat2:OnlineChat</text><text x="1090.500" y="386.300" textLength="96" lengthAdjust="spacingAndGlyphs">onlineService:OnlineService</text><text x="1359" y="386.300" textLength="33" lengthAdjust="spacingAndGlyphs">dAO:DAO</text>
              <text x="513.500" y="415.300" textLength="40" lengthAdjust="spacingAndGlyphs">1: doPost ( )</text><text x="612.500" y="420.500" textLength="77" lengthAdjust="spacingAndGlyphs">1.1: processRequest ( )</text><text x="643.500" y="474" textLength="67.500" lengthAdjust="spacingAndGlyphs">1.1.1: getInstance ( )</text><text x="643.500" y="502.500" textLength="67.500" lengthAdjust="spacingAndGlyphs">1.1.2: getInstance ( )</text><text x="624.500" y="531" textLength="86" lengthAdjust="spacingAndGlyphs">1.1.3: createCommand ( )</text><text x="772.500" y="545" textLength="69" lengthAdjust="spacingAndGlyphs">1.1.3.1: userLogin ( )</text><text x="632.500" y="587" textLength="86" lengthAdjust="spacingAndGlyphs">1.1.4: createCommand ( )</text><text x="735.500" y="626" textLength="54.500" lengthAdjust="spacingAndGlyphs">1.1.5: execute ( )</text><text x="992" y="666" textLength="74" lengthAdjust="spacingAndGlyphs">1.1.5.1: login ( ) : User</text><text x="1166.500" y="698.500" textLength="168.500" lengthAdjust="spacingAndGlyphs">1.1.5.1.1: findUserByUsernamePassword ( ) : User</text><text x="1166.500" y="765.500" textLength="168.500" lengthAdjust="spacingAndGlyphs">1.1.5.1.2: findUserByUsernamePassword ( ) : User</text><text x="992" y="806.500" textLength="74" lengthAdjust="spacingAndGlyphs">1.1.5.2: login ( ) : User</text><text x="736.500" y="827" textLength="54.500" lengthAdjust="spacingAndGlyphs">1.1.6: execute ( )</text><text x="616.500" y="885.500" textLength="77" lengthAdjust="spacingAndGlyphs">1.2: processRequest ( )</text><text x="645" y="922" textLength="69.500" lengthAdjust="spacingAndGlyphs">1.3: forwardToJSP ( )</text><text x="645" y="967.500" textLength="69.500" lengthAdjust="spacingAndGlyphs">1.4: forwardToJSP ( )</text><text x="512.500" y="996.500" textLength="41" lengthAdjust="spacingAndGlyphs">2: doPost ( )</text>
            </g>
            <rect x="1285.500" y="475.500" width="18" height="13" rx="1.500" fill="#fff" stroke="#d4d4d4"/><path d="M1291.500 479.500h5.500v3h-5.500zM1294.500 483v3" fill="none" stroke="#5b97cc"/><path d="M1291 488v6M1288.500 491h5" stroke="#ccc" stroke-width="1.500"/>
          </svg>
          <div class="vbar stage-bar"><svg><use href="#i-up"/></svg><i></i><svg><use href="#i-down"/></svg></div>
        </div>
      </div>
      <aside class="palette">
        <div class="pal-title"><svg class="ic" viewBox="0 0 8 8"><circle cx="2.500" cy="2.500" r="1.800" fill="#e8a060"/><circle cx="5.500" cy="2.500" r="1.800" fill="#79c267"/><circle cx="4" cy="5.500" r="1.800" fill="#6aa6dd"/></svg>Palette</div>
        <div class="pal-tools"><svg width="60" height="10" viewBox="0 0 60 10"><path d="M3 1v7l2-2 3 1z" fill="#fff" stroke="#888" stroke-width=".8"/><circle cx="13" cy="4" r="2.500" fill="#bdd7f0" stroke="#6d92bb"/><circle cx="23" cy="4" r="2.500" fill="#bdd7f0" stroke="#6d92bb"/><path d="M15 6l2 2M25 6l2 2" stroke="#a98"/><path d="M30 2h7v4l-2 2h-5z" fill="#f3dc5d" stroke="#c9ad3a" stroke-width=".7"/><path d="M39 4h4l-2 2z" fill="#333"/></svg></div>
        <div class="pal-bar"><svg class="ic" viewBox="0 0 8 8"><path d="M.5 2.500h6.500v3.500H.5z" fill="#d6e9f8" stroke="#84b1d8"/></svg>UML Common</div>
        <div class="pal-open"><svg class="ic" viewBox="0 0 8 8"><path d="M1 1.500h6v3H1zM4 4.500V8" fill="#f3faff" stroke="#72aede"/></svg>Sequence</div>
        <ul class="pal-list">
          <li><svg class="ic" viewBox="0 0 8 8"><path d="M1 1.500h6v3H1zM4 4.500V8" fill="#f3faff" stroke="#72aede"/></svg>Lifeline</li>
          <li class="more"><svg class="ic" viewBox="0 0 8 8"><circle cx="3.500" cy="3" r="2.500" fill="#3f78b5"/><path d="M4 5h4v3z" fill="#3f78b5"/></svg>Synchronous Message</li>
          <li class="two"><svg class="ic" viewBox="0 0 8 8"><path d="M0 2h2v4H0zM2.500 1.500H6l2 2.500-2 2.500H2.500z" fill="#3f78b5"/></svg><span>Behavior Execution<br>Specification</span></li>
          <li class="more"><svg class="ic" viewBox="0 0 8 8"><path d="M.5 1h7v6h-7zM2 4h2M5 3h2" fill="#e8eef4" stroke="#8aa5bd"/></svg>Option Combined Fragme</li>
          <li><svg class="ic" viewBox="0 0 8 8"><path d="M.5 1h7v6h-7z" fill="#d6ebfa" stroke="#78b2dc"/><path d="M2 3h2v2" stroke="#4b8fc6" fill="none"/></svg>Interaction Use</li>
          <li><svg class="ic" viewBox="0 0 8 8"><path d="M1.500 1.500l5 4.500M6.500 1.500l-5 4.500" stroke="#3f78b5"/></svg>Destruction Event</li>
          <li><svg class="ic" viewBox="0 0 8 8"><path d="M2.500 2L.5 4l2 2M5.500 2l2 2-2 2M4 1v6" stroke="#86a6d6" fill="none"/></svg>State Invariant</li>
        </ul>
        <div class="pal-bar last"><svg class="ic" viewBox="0 0 8 8"><ellipse cx="4" cy="4" rx="3.500" ry="2" fill="#e8e8fa" stroke="#8f8fcf"/></svg>Geometric Shapes</div>
      </aside>
      <div class="vbar outer-bar"><svg><use href="#i-up"/></svg><i></i><svg><use href="#i-down"/></svg></div>
    </div>
    <div class="hbar canvas-hbar"><svg><use href="#i-left"/></svg><i></i><svg><use href="#i-right"/></svg></div>
    <footer class="status">
      <span class="st s1"><svg width="24" height="24" viewBox="0 0 24 24"><path d="M12 2v20M2 11.500h20M9.500 4L12 1l2.500 3M9.500 20l2.500 3 2.500-3M4.500 9L1 11.500 4.500 14M19.500 9l3.500 2.500-3.500 2.500" fill="none" stroke="#1e3a66" stroke-width="1.200"/></svg>788, 446px</span>
      <span class="st s2"><svg width="24" height="24" viewBox="0 0 24 24"><path d="M5.500 2.500h17v16h-17z" fill="none" stroke="#555" stroke-dasharray="1 1"/><path d="M2.500 2v17M5 21.500h18M1 4l1.500-2L4 4M20.500 19.500l2.500 2-2.500 2" fill="none" stroke="#1e3a66" stroke-width="1.200"/></svg></span>
      <span class="st s3"><svg width="24" height="24" viewBox="0 0 24 24"><path d="M5.500 2.500h17v16h-17z" fill="#e8f4fa" stroke="#1e3a66"/><path d="M2.500 2v17M5 21.500h18M1 4l1.500-2L4 4M20.500 19.500l2.500 2-2.500 2" fill="none" stroke="#1e3a66" stroke-width="1.200"/></svg>1926 × 1059px</span>
      <span class="st s4"><svg width="24" height="24" viewBox="0 0 24 24"><path d="M3.500 2.500h16l2 2v18h-18z" fill="#dce6f0" stroke="#3c5a80"/><path d="M7 3v9h11V3M8 22v-6h9v6" fill="#fff" stroke="#3c5a80"/><path d="M9.500 18h2v4h-2z" fill="#3c5a80"/></svg>Size: 445.2KB</span>
      <span class="st s5"></span>
      <span class="st zoomer">200%<svg width="240" height="38" viewBox="1680 1104 240 38"><circle cx="1693.500" cy="1120.500" r="11" fill="#eee" stroke="#8a8a8a"/><path d="M1688 1120.500h11" stroke="#555" stroke-width="3"/><path d="M1719.500 1116.500h132v5h-132z" fill="#e4e9e9" stroke="#d3d9d9"/><path d="M1785 1105.500h16.500v23l-8 5.500-8.500-5.500z" fill="#0078d7"/><circle cx="1876" cy="1120.500" r="11" fill="#eee" stroke="#8a8a8a"/><path d="M1870.500 1120.500h11M1876 1115v11" stroke="#555" stroke-width="3"/></svg></span>
    </footer>
  </section>

  <footer class="taskbar">
    <svg width="1104" height="62" viewBox="0 1142 1104 62">
      <path d="M876 1142h65v62h-65z" fill="#4c4844"/>
      <path d="M24 1164l10-1.500v10.500H24zM35.500 1162l12.500-1.500v12.500H35.500zM24 1174.500h10V1185l-10-1.500zM35.500 1174.500H48v12l-12.500-1.800z" fill="#fff"/>
      <circle cx="111" cy="1170" r="7.500" fill="none" stroke="#fff" stroke-width="1.500"/><path d="M105.500 1176l-9 9" stroke="#fff" stroke-width="1.500"/>
      <path d="M168.500 1163v3h14v-3M168.500 1185v-3h14v3M168.500 1169.500h14v9h-14zM190 1161v4M190 1169v16" fill="none" stroke="#fff" stroke-width="1.400"/><path d="M188.500 1168h3v4h-3z" fill="#fff"/>
      <path d="M225.500 1154v38M229.500 1154v38M1094.500 1154v38M1098.500 1154v38" stroke="#555"/>
      <path d="M290 1169c2-16 29-18 30 3v4h-21c1 7 12 8 19 4v6c-11 5-26 1-26-11 0-7 5-11 10-12-2 2-3 4-3 6h12c0-10-14-9-21 0z" fill="#0a78d7"/>
      <path d="M356 1161h13l3 3h16v22h-32z" fill="#f9dd81"/><path d="M361 1187v-13h23v13h-6v-7h-11v7z" fill="#3fb0e5"/>
      <path d="M421 1163h35v24h-35z" fill="#fff"/><path d="M432 1166v-6c0-7 13-7 13 0v6" fill="none" stroke="#fff" stroke-width="2"/><path d="M431 1168h7v7h-7z" fill="#f25022"/><path d="M439 1168h7v7h-7z" fill="#7fba00"/><path d="M431 1176h7v7h-7z" fill="#00a4ef"/><path d="M439 1176h7v7h-7z" fill="#ffb900"/>
      <path d="M488 1168l18-11 18 11v18.500h-36z" fill="#fff"/><path d="M489 1169h34l-12 7 8 6-14-6z" fill="#111"/>
      <circle cx="573" cy="1172" r="15" fill="#79b443"/><circle cx="573" cy="1167" r="5" fill="#4b5a57"/><circle cx="573" cy="1167" r="2" fill="#a7c48a"/><path d="M572 1172l-9 18M574 1172l9 18M565 1183c5 3 11 3 16 0" fill="none" stroke="#e9ecea" stroke-width="2.600"/>
      <path d="M623 1160h25l2 28-27 1z" fill="#f4f7ee" stroke="#555" stroke-width=".8"/><path d="M624 1176l12-4 13 3v12l-24 1z" fill="#3da928"/><path d="M628 1166c4-3 10-3 13 1l3 4c-5 6-13 8-17 5z" fill="#9bd046" stroke="#234d14"/><path d="M646 1183l9-24 3 1-9 25-3 2z" fill="#e8a33a" stroke="#7b4a12" stroke-width=".6"/><path d="M624 1160h24" stroke="#333" stroke-width="3" stroke-dasharray="1.500 2"/>
      <path d="M704 1157c-18 2-20 27 0 31-11-9-11-22 0-31z" fill="#f7941e"/><circle cx="709" cy="1172.500" r="15.500" fill="#2f2566"/><path d="M693 1168h31M693 1172.500h31M693 1177h31" stroke="#fff" stroke-width="1.800"/>
      <path d="M774 1157h14v12h-14zM760 1173h14v11h-14z" fill="#c9c9c9"/><path d="M776 1159h9v8h-9zM762 1175h9v7h-9z" fill="#1414e0"/><path d="M773 1170h18v3h-18zM758 1185h18v4h-18z" fill="#dcdcdc"/><path d="M780 1165l-12 9 6 1-5 7 11-9-5-1z" fill="#fff200" stroke="#444" stroke-width=".4"/>
      <path d="M841 1160h15v25h-15z" fill="#fff" stroke="#2b579a"/><path d="M844 1165h9M844 1169h9M844 1173h9M844 1177h9M844 1181h9" stroke="#2b579a" stroke-width="1.500"/><path d="M824 1160l20-4v33l-20-4z" fill="#2b579a"/><path d="M828 1167l2.500 12 3-11 3 11 3-12" fill="none" stroke="#fff" stroke-width="2"/>
      <svg x="890" y="1155" width="36" height="36"><use href="#i-paint"/></svg>
      <circle cx="974.500" cy="1173" r="8" fill="none" stroke="#fff" stroke-width="3.500"/><circle cx="974.500" cy="1173" r="11.500" fill="none" stroke="#fff" stroke-width="4" stroke-dasharray="4.500 4.530"/>
      <svg x="1023" y="1154" width="37" height="37"><use href="#i-rsa"/></svg>
      <path d="M279 1199h40v3h-40zM346 1199h39v3h-39zM614 1199h53v3h-53zM815 1199h53v3h-53zM876 1199h65v3h-65zM949 1199h53v3h-53zM1016 1199h52v3h-52z" fill="#fcc78c"/><path d="M320 1199h12v3h-12zM386 1199h13v3h-13z" fill="#c39d72"/>
    </svg>
    <span class="desk">Desktop</span>
    <svg width="496" height="62" viewBox="1182 1142 496 62">
      <path d="M1185 1151l4 4-4 4.500M1190 1151l4 4-4 4.500" fill="none" stroke="#fff" stroke-width="1.300"/>
      <g fill="none" stroke="#fff" stroke-width="1.500"><circle cx="1236" cy="1172" r="3.500"/><path d="M1230 1184c0-11 12-11 12 0M1239 1174l6-2c3 0 5 3 5 6"/><circle cx="1245" cy="1166" r="3.800"/><path d="M1291 1177l9-9 9 9"/></g>
      <rect x="1337" y="1161" width="23" height="24" rx="2" fill="#1e9be6" stroke="#bfe3fa"/><path d="M1344 1166h10v8h-10zM1341 1178h12c5 0 5-6 5-10" fill="none" stroke="#e6f5fe" stroke-width="1.500"/><path d="M1337 1178l7 7h-7z" fill="#f5a623"/>
      <path d="M1386 1180c-4-7 3-11 6-10 2-8 12-6 13 0 5 1 5 9 0 10z" fill="#fff"/><circle cx="1402" cy="1179.500" r="5.500" fill="#4778cf" stroke="#fff"/><path d="M1399 1179.500h6M1402 1176.500v6" stroke="#fff"/>
      <path d="M1433 1164l22-2v23h-22z" fill="none" stroke="#fff" stroke-width="1.800"/><path d="M1446 1165l-6 9h5l-3 8 7-10h-5z" fill="#fff"/><path d="M1449 1172l7 14h-14z" fill="#ffb900"/><path d="M1449 1177v5M1449 1183v1.500" stroke="#222" stroke-width="1.500"/>
      <g fill="none"><path d="M1485 1185c0-12 8-20 18-21M1490 1185c0-9 6-15 13-16" stroke="#8a8783" stroke-width="1.300"/><path d="M1494 1185c0-6 4-10 9-11M1498 1185c0-3 2-5 5-6" stroke="#fff" stroke-width="1.500"/></g><circle cx="1502" cy="1184" r="1.800" fill="#fff"/>
      <path d="M1529.500 1166.500h20v13h-20z" fill="none" stroke="#fff" stroke-width="1.500"/><path d="M1532 1169h15v8h-15zM1551 1170h1.500v6h-1.500z" fill="#fff"/>
      <path d="M1577.500 1169.500h4l6-6v19l-6-6h-4z" fill="none" stroke="#fff" stroke-width="1.300"/><path d="M1590 1169c2 3 2 5 0 8M1593 1166c4 4 4 10 0 14" fill="none" stroke="#fff" stroke-width="1.300"/><path d="M1596 1163c5 6 5 14 0 20" fill="none" stroke="#777"/>
      <path d="M1634 1178c3 3 4 5 6 4s2-4 0-6-7-4-8-1 3 8 6 8l10-15c2-4-1-6-3-3l-7 11M1646 1171l6 3" fill="none" stroke="#fff" stroke-width="1.300"/>
    </svg>
    <span class="lang">ENG</span>
    <div class="clock"><span>11:33</span><span>12/11/2018</span></div>
    <div class="notes"><svg width="60" height="62" viewBox="1850 1142 60 62"><path d="M1858 1161h24v19h-9v6l-6-6h-9z" fill="#fff"/><path d="M1862 1166h16M1862 1170h16M1862 1174h12" stroke="#222" stroke-width="1.300"/><circle cx="1881" cy="1185" r="11" fill="#35322e" stroke="#777"/><text x="1876.500" y="1190.500" class="badge">6</text></svg></div>
  </footer>
</main>
<div class="second"></div>
</div>
</body>
</html>
```
FILE: styles.css
```css
* { box-sizing: border-box; }
html, body { margin: 0; background: #000; }
body { width: 3840px; height: 2160px; overflow: hidden; font-family: "Open Sans", "Noto Sans", sans-serif; font-size: 16.8px; color: #111; }
svg { display: block; flex: none; }
ul { list-style: none; margin: 0; padding: 0; }
.defs { position: absolute; width: 0; height: 0; }
.grow { flex: 1; }
.desktops { display: flex; gap: 6px; align-items: flex-start; }
.screen { width: 1920px; height: 1204px; flex: none; display: flex; flex-direction: column; overflow: hidden; white-space: nowrap; }
.second { flex: 1; height: 124px; background: #fff; }
.mini { width: 8px; height: 8px; }
.ic { width: 8px; height: 8px; }
.minmax { width: 20px; height: 8px; margin-left: auto; }

/* Rational Software Architect */
.rsa { height: 124px; flex: none; overflow: hidden; background: #fff; }
.rsa-title { height: 17px; display: flex; overflow: hidden; line-height: 22px; font-size: 17.2px; align-items: flex-start; }
.rsa-title .grow { margin: -11px 0 0 5px; }
.rsa-logo { width: 26px; height: 26px; margin-top: -14px; }
.rsa-ctl { width: 90px; height: 16px; margin: -6px 29px 0 0; }
.rsa-menu { height: 28px; border-top: 1px solid #eee; display: flex; gap: 8px; padding-left: 4px; align-items: center; font-size: 16.9px; }
.rsa-menu u { text-underline-offset: 2px; text-decoration-thickness: 1px; }
.rsa-tools { height: 33px; background: linear-gradient(#eaeaea, #d8d8d8); border-bottom: 1px solid #aaa; display: flex; align-items: center; }
.glyph { font: bold 8px "Liberation Serif", serif; fill: #3c66a4; }
.tool-field { height: 12px; overflow: hidden; line-height: 14px; }
.font-name { width: 286px; padding-left: 2px; }
.chev { width: 12px; height: 8px; }
.font-size { width: 38px; padding-left: 4px; margin-left: 6px; border-left: 1px solid #bbb; }
.chev + .strip { margin-left: 3px; }
.zoom-value { width: 143px; background: #fff; border-left: 2px solid #7eb4ea; padding-left: 5px; font-size: 16px; }
.zoom-tail { background: linear-gradient(#fff, #fff) 0 50% / 14px 12px no-repeat; overflow: visible; }
.quick { width: 111px; height: 27px; border: 1px solid #aaa; background: #fff; color: #666; padding-left: 1px; line-height: 25px; }
.perspective { flex: 1; height: 33px; margin-left: 3px; display: flex; align-items: center; gap: 6px; padding-left: 6px; background: linear-gradient(#e8f0f2, #9ed0dc); border-left: 1px solid #aaa; }
.persp-on { width: 93px; height: 27px; display: flex; align-items: center; gap: 3px; padding-left: 2px; background: linear-gradient(#b9dcf0, #72bfe4); line-height: 28px; }
.rsa-body { height: 46px; display: flex; background: #a9cdd6; border-top: 2px solid #a9cdd6; gap: 3px; padding-left: 2px; }
.explorer-top { width: 217px; background: #dcdcdc; border-top: 1px solid #999; }
.view-tabs { height: 28px; display: flex; background: linear-gradient(#d2d2d2, #ababab); border-bottom: 1px solid #ccc; }
.view-tabs .minmax, .editor-tabs .minmax { margin-top: 2px; }
.view-tab { width: 158px; background: #dcdcdc; border-right: 1px solid #aaa; display: flex; align-items: center; gap: 2px; padding: 2px 0 0 1px; }
.view-tools { height: 18px; padding-left: 130px; background: linear-gradient(#dcdcdc 12px, #fff 12px); }
.editor-top { flex: 1; background: #eee; border-top: 1px solid #999; }
.editor-tabs { height: 28px; display: flex; background: linear-gradient(#fff, #e6e6e6); }
.tab { display: flex; align-items: center; gap: 2px; color: #777; border-bottom: 1px solid #999; padding: 2px 0 0 3px; }
.tab .mini { margin-bottom: 3px; }
.t1 { width: 188px; } .t2 { width: 72px; } .t3 { width: 139px; } .t4 { width: 142px; } .t5 { width: 236px; } .t6 { width: 296px; } .t7 { width: 100px; }
.tab.on { color: #111; border: solid #999; border-width: 0 1px; background: #f3f3f3; padding-left: 2px; }
.tab:not(.on) + .minmax { margin-right: 3px; }
.heads { display: grid; background: #eee; text-align: center; overflow: hidden; font-size: 15.2px; }
.heads span { background: linear-gradient(#fafafa, #fff); border: solid #d5d5d5; border-width: 0 2px 0 0; }
.heads-back { height: 17px; grid-template-columns: 186px 121px 152px 139px 41px 123px 14px 291px 170px 209px 1fr; }
.heads-back span { line-height: 28px; background: #f6f6f6; }
.heads b { font-weight: 400; font-size: 16.500px; line-height: 31px; text-align: left; padding-left: 10px; background: #fff; }
.heads-front { flex: none; height: 15px; grid-template-columns: 185px 122px 152px 139px 41px 122px 14px 292px 170px 1fr; border-bottom: 2px solid #cacaca; }
.heads-front span { line-height: 7px; padding-left: 2px; }

/* Paint */
.paint { flex: none; height: 1018px; display: flex; flex-direction: column; background: #fff; }
.paint-title { height: 34px; border-bottom: 1px solid #777; display: flex; align-items: center; color: #222; }
.ribbon-tabs { height: 35px; display: flex; color: #444; line-height: 36px; font-size: 15.2px; }
.ribbon-tabs span { text-align: center; }
.ribbon-tabs svg { margin-left: auto; }
.file-tab { width: 84px; height: 34px; background: #1979ca; color: #fff; }
.home-tab { width: 83px; background: #f5f6f7; }
.view-tab2 { width: 77px; }
.qmark { font-size: 14px; fill: #fff; }
.ribbon { height: 145px; background: #f5f6f7; border-top: 1px solid #e6e7e8; border-bottom: 2px solid #e9eaeb; display: flex; padding: 4px 0 3px; color: #444; font-size: 15px; }
.group { border-right: 1px solid #dcdddf; display: flex; flex-direction: column; justify-content: space-between; align-items: center; }
.group footer { height: 24px; line-height: 24px; margin-bottom: -2px; color: #666; padding-right: 5px; }
.group.g-clip footer { padding: 0; }
.row { display: flex; align-self: stretch; }
.dim { color: #8d8d8d; }
.caret { width: 8px; height: 4px; color: #111; }
.dim .caret { color: #555; }
.big { display: flex; flex-direction: column; align-items: center; padding-top: 6px; }
.big span, .big-two span, .color-btn span { line-height: 23px; }
.big span { margin: 6px 0 8px; }
.small-col { display: flex; flex-direction: column; padding-top: 4px; }
.small-col span { height: 33px; display: flex; align-items: center; gap: 5px; }
.c-side { margin-left: 2px; margin-bottom: 4px; }
.g-clip { width: 157px; }
.w-paste { width: 76px; padding-left: 4px; }
.g-image { width: 174px; }
.select-btn { margin: 3px 5px 0 4px; width: 63px; height: 102px; background: #c9def5; border: 1px solid #98c1ea; display: flex; flex-direction: column; align-items: center; }
.sel-top { height: 56px; align-self: stretch; border-bottom: 1px solid #98c1ea; display: flex; align-items: center; justify-content: center; }
.sel-top i { width: 43px; height: 34px; border: 1px dotted #234f80; }
.select-btn span { line-height: 24px; margin-bottom: 7px; }
.g-tools { width: 118px; padding-right: 2px; }
.g-tools footer { padding-right: 1px; }
.tool-a { font: bold 32px "Liberation Serif", serif; fill: #1f3a5f; }
.g-brush { width: 77px; padding-right: 5px; }
.g-shapes { width: 359px; }
.g-shapes .row { padding: 7px 0 0 6px; gap: 6px; }
.g-shapes .small-col { padding-top: 0; margin-top: -3px; }
.g-shapes .small-col span { gap: 4px; }
.g-size { width: 78px; padding-right: 5px; }
.g-colors { width: 533px; }
.g-colors footer { padding-right: 8px; }
.color-btn { width: 64px; height: 102px; margin: 3px 0 0 4px; display: flex; flex-direction: column; align-items: center; border: 1px solid transparent; }
.color-btn + .color-btn { width: 62px; margin-left: 0; }
.color-btn.on { background: #c9def5; border-color: #98c1ea; }
.sw1 { width: 48px; height: 48px; margin: 3px 0 7px; border: 1px solid #888; background: #000; box-shadow: inset 0 0 0 2px #c9def5; }
.sw2 { width: 37px; height: 37px; margin: 9px 0 12px; border: 1px solid #888; background: #fff; box-shadow: inset 0 0 0 1px #ddd; }
.swatches { display: grid; grid-template-columns: repeat(10, 32px); grid-auto-rows: 32px; gap: 1px; margin: 3px 0 0 -1px; align-content: start; }
.swatches i { border: 1px solid #ccc; }
.k0 { background: #000; } .k1 { background: #7f7f7f; } .k2 { background: #880015; } .k3 { background: #ed1c24; } .k4 { background: #ff7f27; }
.k5 { background: #fff200; } .k6 { background: #22b14c; } .k7 { background: #00a2e8; } .k8 { background: #3f48cc; } .k9 { background: #a349a4; }
.k10 { background: #fff; } .k11 { background: #c3c3c3; } .k12 { background: #b97a57; } .k13 { background: #ffaec9; } .k14 { background: #ffc90e; }
.k15 { background: #efe4b0; } .k16 { background: #b5e61d; } .k17 { background: #99d9ea; } .k18 { background: #7092be; } .k19 { background: #c8bfe7; }
.big-two { display: flex; flex-direction: column; align-items: center; padding-top: 9px; }
.big-two svg { margin-bottom: 7px; }
.g-colors .big-two { margin-left: 9px; width: 46px; }
.g-3d { width: 82px; padding-right: 5px; }
.g-alert { width: 78px; padding-right: 5px; }

.canvas { height: 740px; display: flex; overflow: hidden; }
.left { width: 225px; flex: none; border-left: 4px solid #ccd8ea; box-shadow: inset 1px 0 #9fc3cc; padding-left: 1px; border-right: 3px solid #a9cdd6; display: flex; flex-direction: column; }
.tree-box { height: 522px; display: flex; }
.tree { width: 191px; overflow: hidden; padding-top: 1px; }
.tree li, .outline li { height: 25.53px; display: flex; align-items: center; gap: 2px; padding-left: 30px; }
.tree li span { flex: none; line-height: 25px; margin-left: 1px; }
.tree li.root { padding-left: 21px; }
.tree li.root span { margin-left: 0; }
.tree li.sel { background: linear-gradient(#d9d9d9, #d9d9d9) 39px 0 / 101px 25px no-repeat; }
.vbar { width: 25px; background: #f0f0f0; display: flex; flex-direction: column; align-items: center; }
.vbar svg { width: 12px; height: 10px; margin: 7px 0; }
.vbar i { width: 24px; background: #cdcdcd; }
.hbar { background: #f0f0f0; display: flex; align-items: center; flex: none; }
.hbar svg { width: 10px; height: 12px; }
.hbar i { background: #cdcdcd; align-self: stretch; }
.tree-bar i { height: 277px; margin-top: 85px; }
.tree-bar svg:last-child { margin-top: auto; }
.tree-hbar { height: 26px; }
.tree-hbar svg:first-child { margin: 0 9px 0 7px; }
.tree-hbar i { width: 57px; margin-right: 89px; }
.out-tabs { height: 31px; border-top: 3px solid #a9cdd6; display: flex; background: linear-gradient(#d2d2d2, #b4b4b4); color: #777; }
.out-tabs span { display: flex; align-items: center; gap: 2px; padding-left: 2px; width: 46px; }
.out-tabs .o { width: 49px; color: #111; background: #dcdcdc; border-right: 1px solid #aaa; }
.out-tabs .o .mini:last-child { margin-left: auto; margin-right: 1px; }
.out-tabs .minmax { margin-top: 2px; }
.out-tools { height: 12px; background: #dcdcdc; padding-left: 192px; }
.outline { flex: 1; background: #fff; padding-top: 2px; }
.outline li { padding-left: 2px; }
.outline li.in { padding-left: 21px; }
.center { width: 1444px; flex: none; display: flex; flex-direction: column; }
.stage { display: flex; height: 725px; }
.stage-bar { margin-bottom: 3px; }
.stage-bar i { height: 665px; margin-top: 8px; }
.diagram .life { stroke: #bdd7f0; stroke-width: 1.5; stroke-dasharray: 10 4; fill: none; }
.diagram .box { fill: #dfe9f5; stroke: #b1cfec; }
.diagram .tiny { fill: #cfe1f3; stroke: #8fb4dc; stroke-width: .6; }
.diagram .msg { fill: none; stroke: #bdbdbd; stroke-width: 1.3; }
.diagram .ret { fill: none; stroke: #b3b3b3; stroke-dasharray: 1.5 1; }
.diagram .open { fill: none; stroke: #9a9a9a; stroke-width: .8; }
.lbl text { font-size: 8px; fill: #333; }
.frame-name { font-size: 8px; font-weight: 700; fill: #222; }
.palette { width: 226px; flex: none; border-left: 3px solid #cfcfcf; display: flex; flex-direction: column; overflow: hidden; }
.palette .ic { margin-left: 1px; }
.pal-title { height: 18px; line-height: 10px; display: flex; gap: 1px; border-bottom: 1px solid #ccc; background: #f6f6f6; }
.pal-tools { height: 11px; background: #eee; }
.pal-bar { height: 28px; flex: none; line-height: 24px; padding-top: 2px; display: flex; gap: 1px; align-items: center; background: linear-gradient(#e8e8e8, #c4c4c4); border-bottom: 1px solid #bbb; border-top: 1px solid #ddd; }
.pal-open { height: 26px; line-height: 22px; padding-top: 4px; display: flex; gap: 1px; align-items: center; background: #f0f0f0; }
.pal-list { flex: 1; padding-top: 2px; }
.pal-list li { height: 27.5px; line-height: 27px; display: flex; gap: 2px; padding-left: 7px; }
.pal-list .more { background: linear-gradient(#999, #999) 3px 12px / 2px 2px no-repeat; }
.pal-list .two { height: 52px; line-height: 24px; padding-top: 1px; }
.pal-bar.last { margin-bottom: 4px; }
.outer-bar i { height: 476px; margin-top: 82px; }
.outer-bar svg:last-child { margin-top: auto; }
.canvas-hbar { height: 26px; border-bottom: 2px solid #e4e4e4; }
.canvas-hbar svg:first-child { margin: 0 8px; }
.canvas-hbar i { width: 1806px; margin-right: 45px; }
.status { height: 38px; background: #f0f0f0; display: flex; color: #222; }
.st { display: flex; align-items: center; gap: 2px; border-right: 1px solid #dcdcdc; padding: 2px 0 0 1px; }
.st svg { margin-top: -4px; }
.s1 { width: 222px; } .s2 { width: 221px; } .s3 { width: 222px; } .s4 { width: 222px; } .s5 { width: 718px; }
.zoomer { flex: 1; border: 0; padding-left: 23px; justify-content: space-between; }
.zoomer svg { margin-top: -2px; }
.taskbar { height: 62px; flex: none; background: linear-gradient(90deg, #131110, #1a1511 20%, #231a11 45%, #241d13 70%, #100f0d); display: flex; align-items: center; color: #fff; }
.desk { width: 78px; padding-left: 8px; color: #ddd; }
.lang { width: 44px; padding-left: 4px; font-size: 16.4px; }
.clock { width: 122px; padding-top: 2px; display: flex; flex-direction: column; align-items: center; line-height: 29px; font-size: 17.2px; }
.notes { margin-left: 6px; border-right: 1px solid #888; height: 62px; }
.badge { font-size: 14px; fill: #fff; font-weight: 600; }
```
